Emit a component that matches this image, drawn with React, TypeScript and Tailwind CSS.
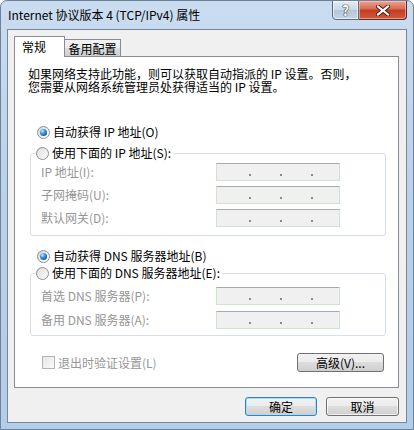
import React from "react";

function Radio({ checked }: { checked?: boolean }) {
  return (
    <span className="flex h-[13px] w-[13px] shrink-0 items-center justify-center rounded-full border border-[#8f9092] bg-[linear-gradient(135deg,#cfd0d2_0%,#f4f4f4_60%,#ffffff_100%)]">
      {checked ? (
        <span className="h-[7px] w-[7px] rounded-full bg-[radial-gradient(circle_at_35%_30%,#c8ecff_0%,#3d9ee0_35%,#14589e_75%,#0c3f78_100%)]" />
      ) : (
        <span className="h-[9px] w-[9px] rounded-full bg-[linear-gradient(135deg,#e2e3e5_0%,#f6f6f6_100%)]" />
      )}
    </span>
  );
}

function IpBox() {
  return (
    <div className="flex h-[18px] w-[124px] items-end gap-[29px] border border-[#cfe3cf] border-t-[#a7a9ab] bg-[#f0f0f0] pb-[4px] pl-[32px]">
      <span className="h-[2px] w-[2px] bg-[#8a8a8a]" />
      <span className="h-[2px] w-[2px] bg-[#8a8a8a]" />
      <span className="h-[2px] w-[2px] bg-[#8a8a8a]" />
    </div>
  );
}

function Field({ label }: { label: string }) {
  return (
    <div className="flex items-center">
      <span className="w-[175px] text-[#969696]">{label}</span>
      <IpBox />
    </div>
  );
}

const btn =
  "flex h-[19px] items-center justify-center rounded-[3px] border bg-[linear-gradient(180deg,#f2f2f2_0%,#ebebeb_49%,#dddddd_50%,#cfcfcf_100%)] text-black";

export default function App() {
  return (
    <div className="relative flex h-[430px] w-[414px] flex-col overflow-hidden rounded-t-[7px] border border-[#6c819a] bg-[linear-gradient(180deg,#cadcf0_0%,#bad1ea_45%,#b3cce8_100%)] text-[12px] leading-[16px] text-black [font-family:'Noto_Sans_CJK_SC','Liberation_Sans',sans-serif]">
      {/* title bar */}
      <div className="flex h-[28px] shrink-0 items-center pl-[7px] pb-[1px]">
        <span className="text-[12px] text-black">Internet 协议版本 4 (TCP/IPv4) 属性</span>
      </div>

      {/* caption buttons */}
      <div className="absolute right-[6px] top-[-1px] flex h-[20px]">
        <div className="flex w-[27px] items-center justify-center rounded-bl-[4px] border border-[#5b6b7e] bg-[linear-gradient(180deg,#e3ebf4_0%,#cbd8e6_50%,#b4c5d8_51%,#c6d5e5_100%)] shadow-[inset_0_0_0_1px_rgba(255,255,255,0.6)]">
          <span className="text-[14px] font-bold leading-[14px] text-white [text-shadow:0_0_1px_#2a3440,0_0_1px_#2a3440,0_0_1px_#2a3440]">
            ?
          </span>
        </div>
        <div className="flex w-[48px] items-center justify-center rounded-br-[4px] border border-l-0 border-[#5e2a22] bg-[linear-gradient(180deg,#eba494_0%,#d9684f_45%,#c23c22_50%,#d15a3c_100%)] shadow-[inset_0_0_0_1px_rgba(255,220,210,0.5)]">
          <svg width="14" height="11" viewBox="0 0 14 11">
            <path d="M2 1.5 L12 9.5 M12 1.5 L2 9.5" stroke="#3d1a14" strokeWidth="4" strokeLinecap="square" />
            <path d="M2 1.5 L12 9.5 M12 1.5 L2 9.5" stroke="#ffffff" strokeWidth="2.2" strokeLinecap="square" />
          </svg>
        </div>
      </div>

      {/* client area */}
      <div className="mx-[6px] flex h-[394px] shrink-0 flex-col border border-[#7b8794] bg-[#f0f0f0]">
        {/* tabs */}
        <div className="mt-[6px] flex h-[20px] items-end pl-[6px]">
          <div className="relative z-10 -mb-px flex h-[21px] w-[51px] items-center border border-b-0 border-[#898c95] bg-white pl-[7px] pb-[1px]">
            常规
          </div>
          <div className="flex h-[17px] w-[56px] items-center justify-center border border-b-0 border-l-0 border-[#898c95] bg-[linear-gradient(180deg,#f3f3f3_0%,#ebebeb_50%,#dddddd_51%,#cfcfcf_100%)] pt-[2px]">
            备用配置
          </div>
        </div>

        {/* panel */}
        <div className="ml-[6px] flex h-[332px] w-[385px] flex-col border border-[#898c95] bg-white">
          <div className="mt-[11px] flex flex-col pl-[13px]">
            <span className="h-[12px] leading-[12px]">如果网络支持此功能，则可以获取自动指派的 IP 设置。否则，</span>
            <span className="mt-px h-[12px] leading-[12px]">您需要从网络系统管理员处获得适当的 IP 设置。</span>
          </div>

          <div className="mt-[31px] flex h-[16px] items-center gap-[3px] pl-[22px]">
            <Radio checked />
            <span>自动获得 IP 地址(O)</span>
          </div>

          <fieldset className="ml-[15px] mt-[5px] w-[356px] rounded-[3px] border border-[#d5dfe5] pb-[8px]">
            <legend className="ml-[5px] flex h-[16px] items-center gap-[3px] pr-[2px]">
              <Radio />
              <span>使用下面的 IP 地址(S):</span>
            </legend>
            <div className="flex flex-col gap-[5px] pl-[10px] pt-[2px]">
              <Field label="IP 地址(I):" />
              <Field label="子网掩码(U):" />
              <Field label="默认网关(D):" />
            </div>
          </fieldset>

          <div className="mt-[12px] flex h-[16px] items-center gap-[3px] pl-[22px]">
            <Radio checked />
            <span>自动获得 DNS 服务器地址(B)</span>
          </div>

          <fieldset className="ml-[15px] mt-[1px] w-[356px] rounded-[3px] border border-[#d5dfe5] pb-[6px]">
            <legend className="ml-[5px] flex h-[16px] items-center gap-[3px] pr-[2px]">
              <Radio />
              <span>使用下面的 DNS 服务器地址(E):</span>
            </legend>
            <div className="flex flex-col gap-[6px] pl-[10px] pt-[6px]">
              <Field label="首选 DNS 服务器(P):" />
              <Field label="备用 DNS 服务器(A):" />
            </div>
          </fieldset>

          <div className="mt-[17px] flex items-center justify-between pl-[27px] pr-[14px]">
            <div className="flex items-center gap-[3px]">
              <span className="h-[13px] w-[13px] border border-[#b4b4b4] bg-[linear-gradient(135deg,#e6e6e6_0%,#fafafa_100%)]" />
              <span className="text-[#969696]">退出时验证设置(L)</span>
            </div>
            <button className={`${btn} w-[87px] border-[#707070]`}>高级(V)...</button>
          </div>
        </div>

        {/* dialog buttons */}
        <div className="mt-[9px] flex justify-end gap-[9px] pr-[7px]">
          <button className={`${btn} w-[72px] border-[#3c7fb1] shadow-[inset_0_0_0_1px_#9fe0fb]`}>确定</button>
          <button className={`${btn} w-[73px] border-[#707070] shadow-[inset_0_0_0_1px_rgba(255,255,255,0.7)]`}>取消</button>
        </div>
      </div>
    </div>
  );
}
